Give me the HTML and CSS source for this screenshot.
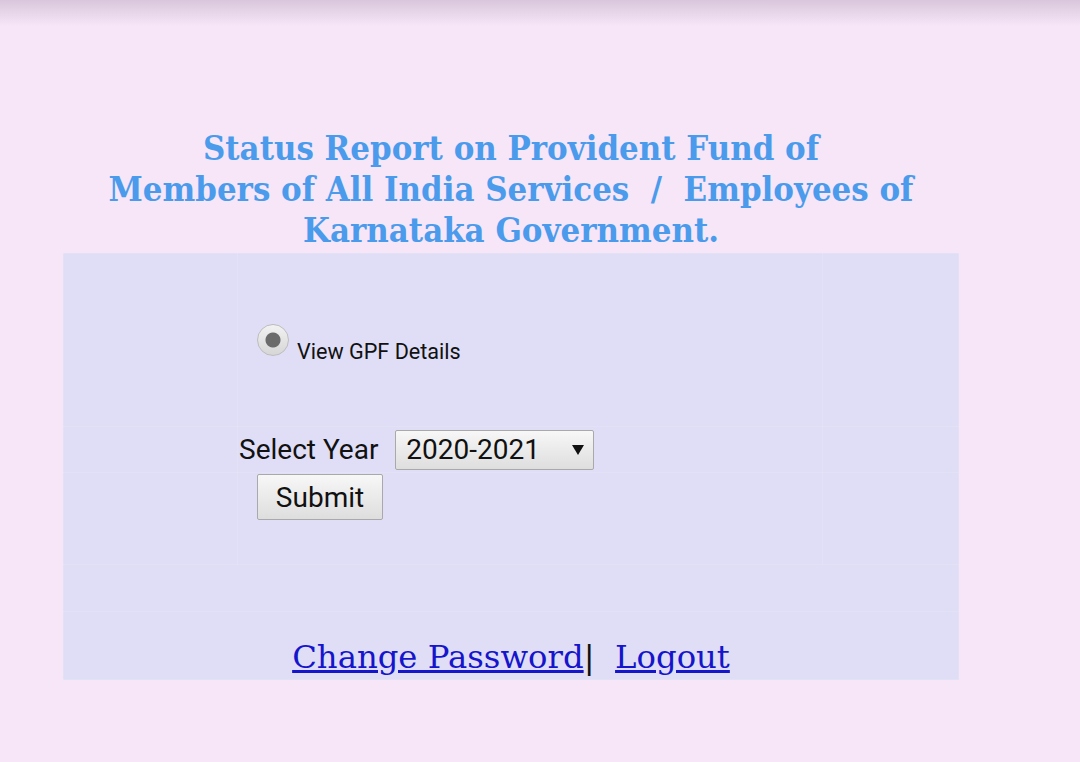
FILE: index.html
```html
<!DOCTYPE html>
<html lang="en">
<head>
  <meta charset="UTF-8">
  <meta name="viewport" content="width=device-width, initial-scale=1.0">
  <title>GPF Status Report</title>
  <link rel="stylesheet" href="styles.css">
</head>
<body>
  <div class="topbar"></div>
  <div class="page">
    <h1 class="heading">
      Status Report on Provident Fund of<br>
      Members of All India Services &nbsp;/&nbsp; Employees of<br>
      Karnataka Government.
    </h1>

    <form class="panel" id="gpfForm">
      <table class="grid">
        <tr class="row-radio">
          <td class="side-l"></td>
          <td class="main">
            <label class="radio">
              <input type="radio" name="report" value="gpf" checked>
              <span>View GPF Details</span>
            </label>
          </td>
          <td class="side-r"></td>
        </tr>
        <tr class="row-year">
          <td class="side-l"></td>
          <td class="main">
            <label for="year" class="year-label">Select Year</label>
            <select id="year" name="year" class="year">
              <option>2020-2021</option>
              <option>2019-2020</option>
              <option>2018-2019</option>
            </select>
          </td>
          <td class="side-r"></td>
        </tr>
        <tr class="row-submit">
          <td class="side-l"></td>
          <td class="main">
            <button type="button" class="submit">Submit</button>
          </td>
          <td class="side-r"></td>
        </tr>
        <tr class="row-gap">
          <td colspan="3"></td>
        </tr>
        <tr class="row-links">
          <td colspan="3" class="links">
            <a href="#">Change Password</a>|&nbsp; <a href="#">Logout</a>
          </td>
        </tr>
      </table>
    </form>
  </div>
</body>
</html>
```

FILE: styles.css
```css
body {
  margin: 0;
  background-color: #f6e6f8;
  font-family: Roboto, "Liberation Sans", sans-serif;
  min-height: 762px;
}
.topbar {
  height: 26px;
  background: linear-gradient(#d9c6dc, #f6e6f8);
}
.page {
  width: 896px;
  margin-left: 63px;
  padding-top: 102px;
}
.heading {
  margin: 0 0 2px;
  text-align: center;
  font-family: "DejaVu Serif Condensed", "DejaVu Serif", serif;
  font-weight: bold;
  font-size: 34.4px;
  line-height: 41px;
  color: #4a9bec;
}
.panel {
  margin: 0;
  background-color: #dfdef6;
}
.grid {
  width: 100%;
  border-collapse: collapse;
}
.grid td {
  padding: 0;
  border: 1px solid rgba(255, 255, 255, 0.12);
}
.side-l {
  width: 173px;
}
.side-r {
  width: 135px;
}
.row-radio td {
  height: 172px;
}
.row-year td {
  height: 45px;
}
.row-submit td {
  height: 91px;
  vertical-align: top;
}
.row-gap td {
  height: 46px;
}
.row-links td {
  height: 61px;
}
.radio {
  display: flex;
  align-items: center;
  margin-left: 19px;
  font-size: 21.6px;
  color: #111;
}
.radio input {
  appearance: none;
  width: 32px;
  height: 32px;
  margin: 0 8px 0 0;
  border: 1px solid #bdbdbd;
  border-radius: 50%;
  background: radial-gradient(circle, #6b6b6b 0 7px, transparent 8px),
    linear-gradient(#f2f2f2, #d6d6d6);
}
.radio span {
  position: relative;
  top: 11px;
}
.year-label {
  font-size: 28px;
  color: #111;
  margin-left: 1px;
  margin-right: 13px;
  vertical-align: middle;
}
.year {
  appearance: none;
  width: 199px;
  height: 40px;
  padding: 0 0 0 10px;
  font-family: inherit;
  font-size: 28px;
  color: #111;
  border: 1px solid #a9a9a9;
  border-radius: 2px;
  background: url("data:image/svg+xml,%3Csvg xmlns='http://www.w3.org/2000/svg' width='12' height='12'%3E%3Cpath d='M0 1h12L6 11z' fill='%23111'/%3E%3C/svg%3E") no-repeat right 9px center,
    linear-gradient(#f7f7f7, #dedede);
  vertical-align: middle;
}
.submit {
  margin: 1px 0 0 19px;
  width: 126px;
  height: 46px;
  font-family: inherit;
  font-size: 28px;
  color: #111;
  border: 1px solid #a9a9a9;
  border-radius: 2px;
  background: linear-gradient(#f7f7f7, #dedede);
}
.links {
  text-align: center;
  vertical-align: bottom;
  font-family: "DejaVu Serif", serif;
  font-size: 32.3px;
  line-height: 1;
  padding-bottom: 6px !important;
  color: #111;
}
.links a {
  color: #1515cc;
}
```
